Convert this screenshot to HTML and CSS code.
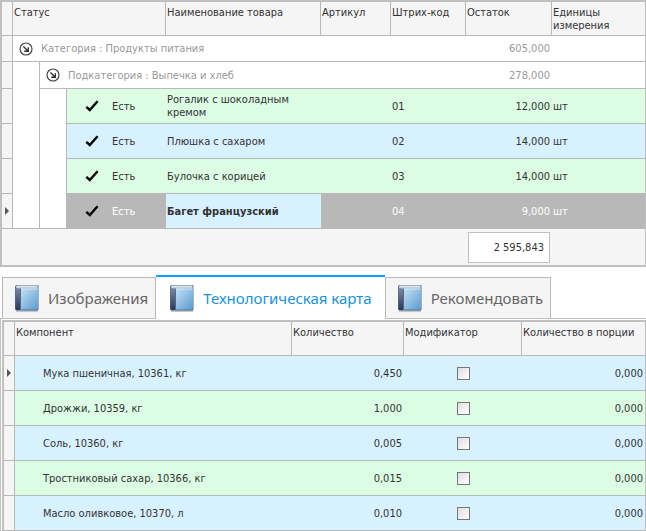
FILE: index.html
```
<!doctype html>
<html lang="ru">
<head>
  <meta charset="utf-8" />
  <meta name="viewport" content="width=device-width, initial-scale=1" />
  <title>Остатки товаров</title>
  <link rel="stylesheet" href="styles.css">
</head>
<body>
  <svg class="defs" width="0" height="0" aria-hidden="true">
    <defs>
      <linearGradient id="cover" x1="0" y1="0" x2="1" y2="1">
        <stop offset="0" stop-color="#c6e2f5"/><stop offset="1" stop-color="#5b9bd0"/>
      </linearGradient>
      <linearGradient id="spine" x1="0" y1="0" x2="0" y2="1">
        <stop offset="0" stop-color="#7d8ba6"/><stop offset="1" stop-color="#2c3754"/>
      </linearGradient>
      <symbol id="check" viewBox="0 0 14 12">
        <path d="M1.3 6.8 4.8 10 12.6 1.2" fill="none" stroke="#000" stroke-width="2.4"/>
      </symbol>
      <symbol id="expand" viewBox="0 0 14 14">
        <circle cx="7" cy="7" r="6" fill="none" stroke="#444" stroke-width="1.2"/>
        <path d="M4.4 4.4 9 9M9.3 5.2v4.1H5.2" fill="none" stroke="#333" stroke-width="1.4"/>
      </symbol>
      <symbol id="book" viewBox="0 0 26 28">
        <path d="M2 27h22" stroke="#c3c7cc" stroke-width="2"/>
        <path d="M3 1h20.500q1 0 1 1v23.500q0 1-1 1H3q-2 0-2-2V3q0-2 2-2z" fill="#4e6c93"/>
        <path d="M3 1.500h20.500v3H2.500q-1-2 .5-3z" fill="#eaf2f8"/>
        <path d="M3 3.200h20.500" stroke="#8fa6bd" stroke-width=".6"/>
        <path d="M6 4.500h18v21H6z" fill="url(#cover)"/>
        <path d="M1.500 3.500 6 5v21H3q-1.500 0-1.500-1.500z" fill="url(#spine)"/>
        <path d="M6.500 4.500v21" stroke="#35527c" stroke-width=".8"/>
        <path d="M7 5h16.500" stroke="#e0f0fb" stroke-width=".8"/>
      </symbol>
    </defs>
  </svg>

  <main>
    <table class="grid stock">
      <colgroup>
        <col class="c-mark"><col class="c-indent"><col class="c-indent"><col class="c-status"><col class="c-name">
        <col class="c-article"><col class="c-barcode"><col class="c-rest"><col>
      </colgroup>
      <thead>
        <tr>
          <th></th>
          <th colspan="3" scope="col">Статус</th>
          <th scope="col">Наименование товара</th>
          <th scope="col">Артикул</th>
          <th scope="col">Штрих-код</th>
          <th scope="col">Остаток</th>
          <th scope="col">Единицы измерения</th>
        </tr>
      </thead>
      <tbody>
        <tr class="group">
          <td class="mark"></td>
          <td colspan="6"><div class="group-head"><button type="button" class="toggle" aria-label="Свернуть категорию" aria-expanded="true"><svg><use href="#expand"/></svg></button>Категория : Продукты питания</div></td>
          <td class="num">605,000</td>
          <td></td>
        </tr>
        <tr class="group">
          <td class="mark"></td>
          <td class="indent"></td>
          <td colspan="5"><div class="group-head"><button type="button" class="toggle" aria-label="Свернуть подкатегорию" aria-expanded="true"><svg><use href="#expand"/></svg></button>Подкатегория : Выпечка и хлеб</div></td>
          <td class="num">278,000</td>
          <td></td>
        </tr>
        <tr class="green">
          <td class="mark"></td><td class="indent"></td><td class="indent"></td>
          <td><div class="status"><svg><use href="#check"/></svg>Есть</div></td>
          <td>Рогалик с шоколадным кремом</td><td></td><td>01</td><td class="num">12,000</td><td>шт</td>
        </tr>
        <tr class="blue">
          <td class="mark"></td><td class="indent"></td><td class="indent"></td>
          <td><div class="status"><svg><use href="#check"/></svg>Есть</div></td>
          <td>Плюшка с сахаром</td><td></td><td>02</td><td class="num">14,000</td><td>шт</td>
        </tr>
        <tr class="green">
          <td class="mark"></td><td class="indent"></td><td class="indent"></td>
          <td><div class="status"><svg><use href="#check"/></svg>Есть</div></td>
          <td>Булочка с корицей</td><td></td><td>03</td><td class="num">14,000</td><td>шт</td>
        </tr>
        <tr class="selected">
          <td class="mark"><span class="arrow"></span></td><td class="indent"></td><td class="indent"></td>
          <td><div class="status"><svg><use href="#check"/></svg>Есть</div></td>
          <td class="focused">Багет французский</td><td></td><td>04</td><td class="num">9,000</td><td>шт</td>
        </tr>
      </tbody>
      <tfoot>
        <tr>
          <td colspan="7"></td>
          <td><div class="total">2 595,843</div></td>
          <td></td>
        </tr>
      </tfoot>
    </table>

    <div class="tabs" role="tablist">
      <button type="button" class="tab" role="tab" aria-selected="false"><svg><use href="#book"/></svg>Изображения</button>
      <button type="button" class="tab active" role="tab" aria-selected="true"><svg><use href="#book"/></svg>Технологическая карта</button>
      <button type="button" class="tab" role="tab" aria-selected="false"><svg><use href="#book"/></svg>Рекомендовать</button>
    </div>

    <section class="panel" role="tabpanel" aria-label="Технологическая карта">
      <table class="grid recipe">
        <colgroup>
          <col class="c-mark"><col class="c-component"><col class="c-amount"><col class="c-modifier"><col>
        </colgroup>
        <thead>
          <tr>
            <th></th>
            <th scope="col">Компонент</th>
            <th scope="col">Количество</th>
            <th scope="col">Модификатор</th>
            <th scope="col">Количество в порции</th>
          </tr>
        </thead>
        <tbody>
          <tr class="blue">
            <td class="mark"><span class="arrow"></span></td><td class="component">Мука пшеничная, 10361, кг</td><td class="num">0,450</td>
            <td class="flag"><input type="checkbox" aria-label="Модификатор: мука пшеничная"></td><td class="num">0,000</td>
          </tr>
          <tr class="green">
            <td class="mark"></td><td class="component">Дрожжи, 10359, кг</td><td class="num">1,000</td>
            <td class="flag"><input type="checkbox" aria-label="Модификатор: дрожжи"></td><td class="num">0,000</td>
          </tr>
          <tr class="blue">
            <td class="mark"></td><td class="component">Соль, 10360, кг</td><td class="num">0,005</td>
            <td class="flag"><input type="checkbox" aria-label="Модификатор: соль"></td><td class="num">0,000</td>
          </tr>
          <tr class="green">
            <td class="mark"></td><td class="component">Тростниковый сахар, 10366, кг</td><td class="num">0,015</td>
            <td class="flag"><input type="checkbox" aria-label="Модификатор: тростниковый сахар"></td><td class="num">0,000</td>
          </tr>
          <tr class="blue">
            <td class="mark"></td><td class="component">Масло оливковое, 10370, л</td><td class="num">0,010</td>
            <td class="flag"><input type="checkbox" aria-label="Модификатор: масло оливковое"></td><td class="num">0,000</td>
          </tr>
        </tbody>
      </table>
    </section>
  </main>
</body>
</html>
```
FILE: styles.css
```
:root{
  --line:#b8b8b8;
  --frame:#c0c0c0;
  --head:#f5f5f5;
  --text:#333;
  --muted:#999;
  --green:#dcfce4;
  --blue:#d8f1ff;
  --accent:#0aa2ff;
}

*{box-sizing:border-box}
body{
  margin:0; background:#fff; color:var(--text);
  font:11px/13px "DejaVu Sans Condensed", Tahoma, sans-serif;
}
button{font:inherit; color:inherit; cursor:pointer}
.defs{display:block}

/* grids */
.grid{
  width:100%; table-layout:fixed; border-collapse:separate; border-spacing:0;
  border:2px solid var(--frame); border-right-width:1px;
}
.grid th,.grid td{padding:0 1px; border-bottom:1px solid var(--line); text-align:left; font-weight:400}
.grid th{height:34px; padding-top:4px; vertical-align:top; background:var(--head); border-right:1px solid var(--line)}
.grid th:last-child{border-right:0}
.grid td{height:35px; vertical-align:middle}
.grid .mark{padding:0; background:var(--head); border-right:1px solid var(--line)}
.grid .num{padding-right:2px; text-align:right}

.c-mark{width:11px}
.c-indent{width:27px}
.c-status{width:99px}
.c-name{width:155px}
.c-article{width:70px}
.c-barcode{width:75px}
.c-rest{width:86px}
.c-component{width:277px}
.c-amount{width:112px}
.c-modifier{width:118px}

.green td{background:var(--green)}
.blue td{background:var(--blue)}
.grid .indent{background:#fff; border-right:1px solid var(--line); border-bottom:0}
.selected td{background:var(--line); color:#fff}
.selected .indent{border-bottom:1px solid var(--line)}
.grid .focused{background:var(--blue); color:var(--text); font-weight:700}

.arrow{
  display:block; width:4px; margin-left:3px;
  border:4px solid transparent; border-left-color:#555; border-right:0;
}

/* stock */
.stock .group td{height:27px; color:var(--muted)}
.stock .group:first-child td{height:26px}
.group-head{display:flex; align-items:center; gap:8px; padding-left:5px}
.toggle{display:flex; padding:0; border:0; background:none}
.toggle svg{width:14px; height:14px}
.status{display:flex; align-items:center; gap:13px; padding-left:17px}
.status svg{width:14px; height:12px}

.stock tfoot td{height:36px; border:0; background:var(--head)}
.stock tfoot .total{
  margin:0 1px; padding:8px 5px;
  background:#fff; border:1px solid var(--frame); text-align:right;
}

/* tabs */
.tabs{display:flex; align-items:flex-end; padding:8px 0 0 2px}
.tab{
  display:flex; align-items:center; gap:8px; height:41px; padding:0 7px 0 11px;
  background:var(--head); border:1px solid var(--line); border-bottom:0;
  color:#666; font:15px/20px "Noto Sans", sans-serif; white-space:nowrap;
}
.tab svg{width:26px; height:28px}
/* the open tab covers the panel's top line */
.tab.active{
  height:44px; margin-bottom:-1px; padding:0 13px; z-index:1;
  background:#fff; border:0; border-top:2px solid var(--accent); color:#1593e0;
}
.panel{padding:1px 0 0 1px; border:1px solid var(--frame); border-width:1px 0 0 1px}

/* recipe */
.recipe .component{padding-left:28px}
.recipe .flag{text-align:center}
.recipe input{
  appearance:none; display:block; width:13px; height:13px; margin:0 auto;
  border:1px solid #777; background:linear-gradient(135deg, #dedede, #fff);
}
.recipe input:checked{background:#555}
```
